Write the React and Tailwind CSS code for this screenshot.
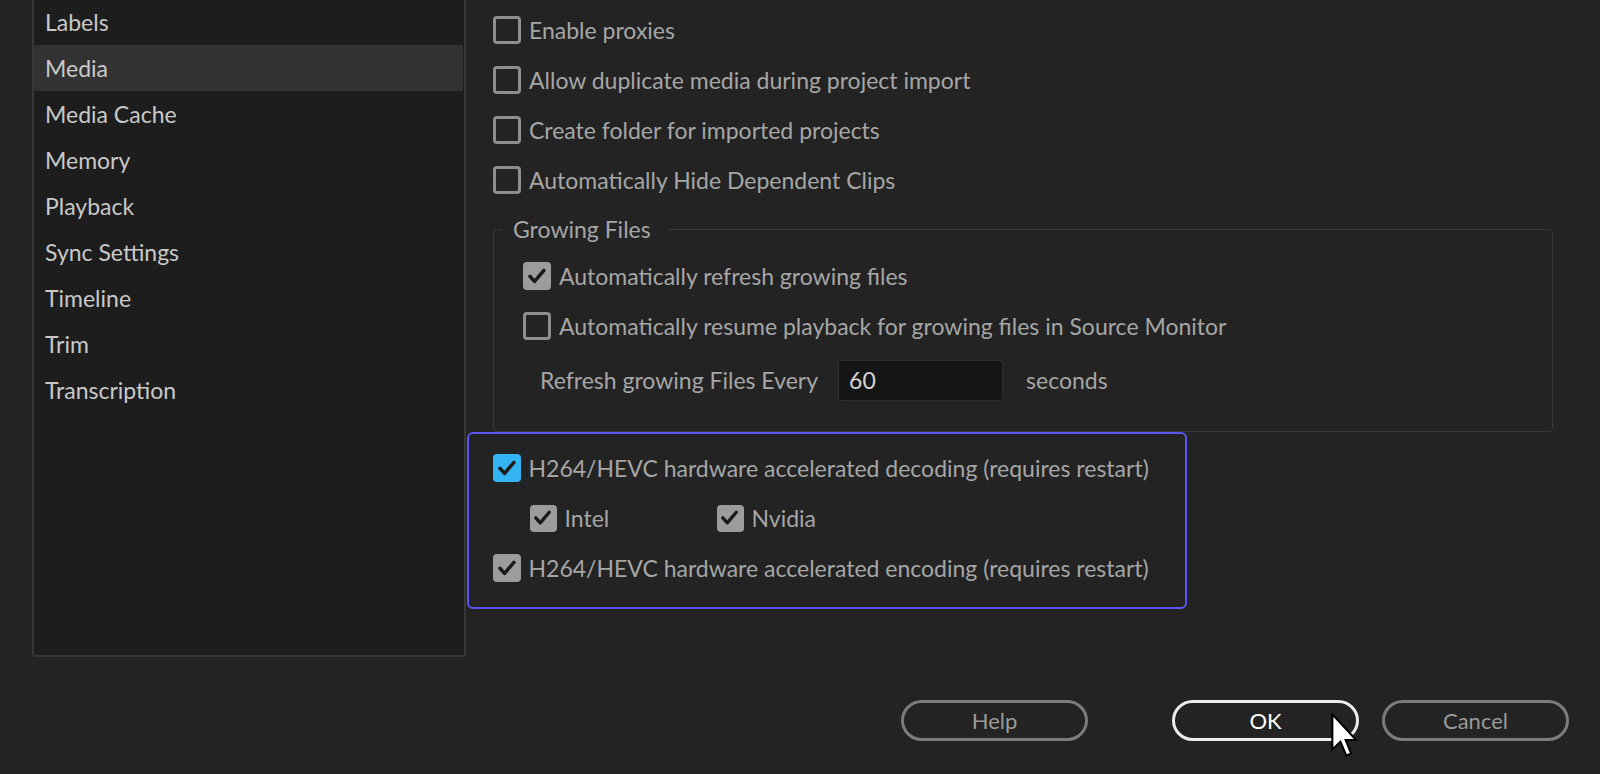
import React from "react";

const sideItems = [
  "Labels",
  "Media",
  "Media Cache",
  "Memory",
  "Playback",
  "Sync Settings",
  "Timeline",
  "Trim",
  "Transcription",
];

function Check({ checked, blue, size = "w-[28px] h-[28px]" }) {
  if (!checked) {
    return (
      <span
        className={`${size} shrink-0 rounded-[4px] border-[3px] border-[#8e8e8e] bg-transparent`}
      />
    );
  }
  return (
    <span
      className={`${size} shrink-0 rounded-[4px] flex items-center justify-center ${
        blue ? "bg-[#34b4f2]" : "bg-[#9c9c9c]"
      }`}
    >
      <svg viewBox="0 0 28 28" className="w-[78%] h-[78%]">
        <path
          d="M5 14.5 L11 21 L23 7"
          fill="none"
          stroke="#1b1b1b"
          strokeWidth="4.5"
          strokeLinecap="round"
          strokeLinejoin="round"
        />
      </svg>
    </span>
  );
}

function Row({ checked, blue, children, className = "" }) {
  return (
    <div className={`h-[50px] flex items-center gap-[8px] ${className}`}>
      <Check checked={checked} blue={blue} />
      <span className="text-[23px] text-[#a6a6a6] leading-none">{children}</span>
    </div>
  );
}

function Button({ children, primary }) {
  return (
    <button
      className={`h-[41px] w-[187px] rounded-full border-[3px] text-[22px] leading-none flex items-center justify-center ${
        primary
          ? "border-[#ececec] text-white"
          : "border-[#7c7c7c] text-[#9a9a9a]"
      }`}
    >
      {children}
    </button>
  );
}

export default function App() {
  return (
    <div className="relative w-[1600px] h-[774px] overflow-hidden bg-[#232323] font-['Lato',sans-serif]">
      <div className="flex">
        {/* left category list */}
        <aside className="ml-[32px] w-[434px] h-[657px] shrink-0 border-x-2 border-b-2 border-[#363636] bg-[#1d1d1d] rounded-b-[3px]">
          <ul className="-mt-px">
            {sideItems.map((item) => (
              <li
                key={item}
                className={`h-[46px] flex items-center pl-[11px] text-[23px] text-[#c9c9c9] ${
                  item === "Media" ? "bg-[#323232] mr-[1px]" : ""
                }`}
              >
                {item}
              </li>
            ))}
          </ul>
        </aside>

        <main className="ml-[27px] pt-[5px]">
          <Row>Enable proxies</Row>
          <Row>Allow duplicate media during project import</Row>
          <Row>Create folder for imported projects</Row>
          <Row>Automatically Hide Dependent Clips</Row>

          {/* Growing Files group */}
          <div className="relative mt-[24px] w-[1060px] h-[203px] border border-[#393939] rounded-[4px] pt-[21px] pl-[29px]">
            <span className="absolute -top-[16px] left-[8px] bg-[#232323] pl-[11px] pr-[18px] text-[23px] leading-[30px] text-[#a6a6a6]">
              Growing Files
            </span>
            <Row checked>Automatically refresh growing files</Row>
            <Row>Automatically resume playback for growing files in Source Monitor</Row>
            <div className="mt-[9px] flex items-center pl-[17px]">
              <span className="text-[23px] text-[#a6a6a6] leading-none">
                Refresh growing Files Every
              </span>
              <div className="ml-[20px] w-[165px] h-[41px] rounded-[3px] border border-[#2e2e2e] bg-[#151515] flex items-center pl-[10px] text-[23px] text-[#d6d6d6]">
                60
              </div>
              <span className="ml-[23px] text-[23px] text-[#a6a6a6] leading-none">
                seconds
              </span>
            </div>
          </div>

          {/* highlighted hardware section */}
          <div className="-ml-[26px] w-[720px] h-[177px] border-[2.5px] border-[#5a55f4] rounded-[6px] pt-[9px] pl-[23.5px]">
            <Row checked blue>
              H264/HEVC hardware accelerated decoding (requires restart)
            </Row>
            <div className="h-[50px] flex items-center pl-[37px]">
              <div className="w-[187px] flex items-center gap-[8px]">
                <Check checked size="w-[27px] h-[27px]" />
                <span className="text-[23px] text-[#a6a6a6] leading-none">Intel</span>
              </div>
              <div className="flex items-center gap-[8px]">
                <Check checked size="w-[27px] h-[27px]" />
                <span className="text-[23px] text-[#a6a6a6] leading-none">Nvidia</span>
              </div>
            </div>
            <Row checked>H264/HEVC hardware accelerated encoding (requires restart)</Row>
          </div>
        </main>
      </div>

      {/* dialog buttons */}
      <div className="mt-[43px] flex justify-end pr-[31px]">
        <Button>Help</Button>
        <div className="ml-[84px]">
          <Button primary>OK</Button>
        </div>
        <div className="ml-[23px]">
          <Button>Cancel</Button>
        </div>
      </div>

      {/* mouse pointer */}
      <svg
        viewBox="0 0 12 20"
        className="absolute left-[1331px] top-[713px] w-[27px] h-[45px]"
      >
        <path
          d="M0.6 0.6 L0.6 16.2 L4.2 12.8 L6.8 19 L9 18 L6.5 12 L11.2 12 Z"
          fill="#ffffff"
          stroke="#000000"
          strokeWidth="0.9"
          strokeLinejoin="miter"
        />
      </svg>
    </div>
  );
}
